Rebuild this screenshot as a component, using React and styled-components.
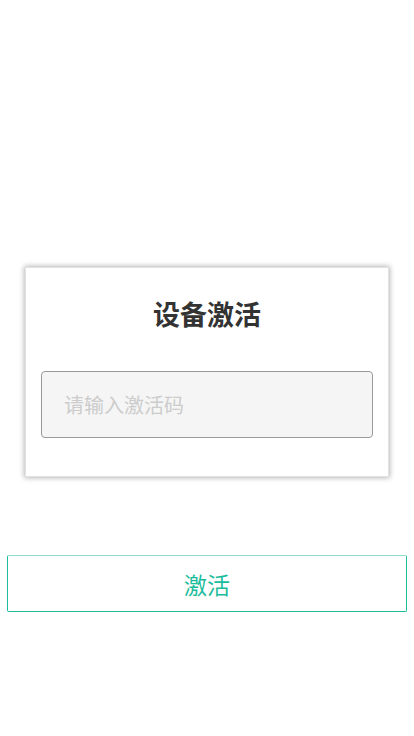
import React from 'react';
import styled, { createGlobalStyle } from 'styled-components';

const GlobalStyle = createGlobalStyle`
  body {
    margin: 0;
    background: #fff;
    font-family: 'Noto Sans CJK SC', 'Noto Sans', sans-serif;
  }
`;

const Page = styled.div`
  width: 414px;
  height: 736px;
  display: flex;
  flex-direction: column;
  padding-top: 267px;
  box-sizing: border-box;
`;

const Card = styled.div`
  margin: 0 25px;
  background: #fff;
  border: 1px solid #e2e2e2;
  box-shadow: 0 0 5px 1px rgba(0, 0, 0, 0.28);
  padding: 26px 15px 38px;
  display: flex;
  flex-direction: column;
  align-items: center;
`;

const Title = styled.h2`
  margin: 0;
  font-size: 27px;
  line-height: 40px;
  font-weight: bold;
  color: #333;
`;

const Input = styled.input`
  margin-top: 37px;
  width: 100%;
  height: 67px;
  box-sizing: border-box;
  background: #f5f5f5;
  border: 1px solid #999;
  border-radius: 4px;
  padding: 0 22px;
  font-family: inherit;
  font-size: 20px;
  color: #333;
  outline: none;

  &::placeholder {
    color: #cccccc;
  }
`;

const Button = styled.button`
  margin: 78px 7px 0;
  height: 57px;
  background: #fff;
  border: 1px solid #1abc9c;
  border-top-color: #8fdccb;
  border-radius: 2px;
  font-family: inherit;
  font-size: 23px;
  color: #1abc9c;
  cursor: pointer;
`;

const App = () => (
  <Page>
    <GlobalStyle />
    <Card>
      <Title>设备激活</Title>
      <Input placeholder="请输入激活码" />
    </Card>
    <Button>激活</Button>
  </Page>
);

export default App;
